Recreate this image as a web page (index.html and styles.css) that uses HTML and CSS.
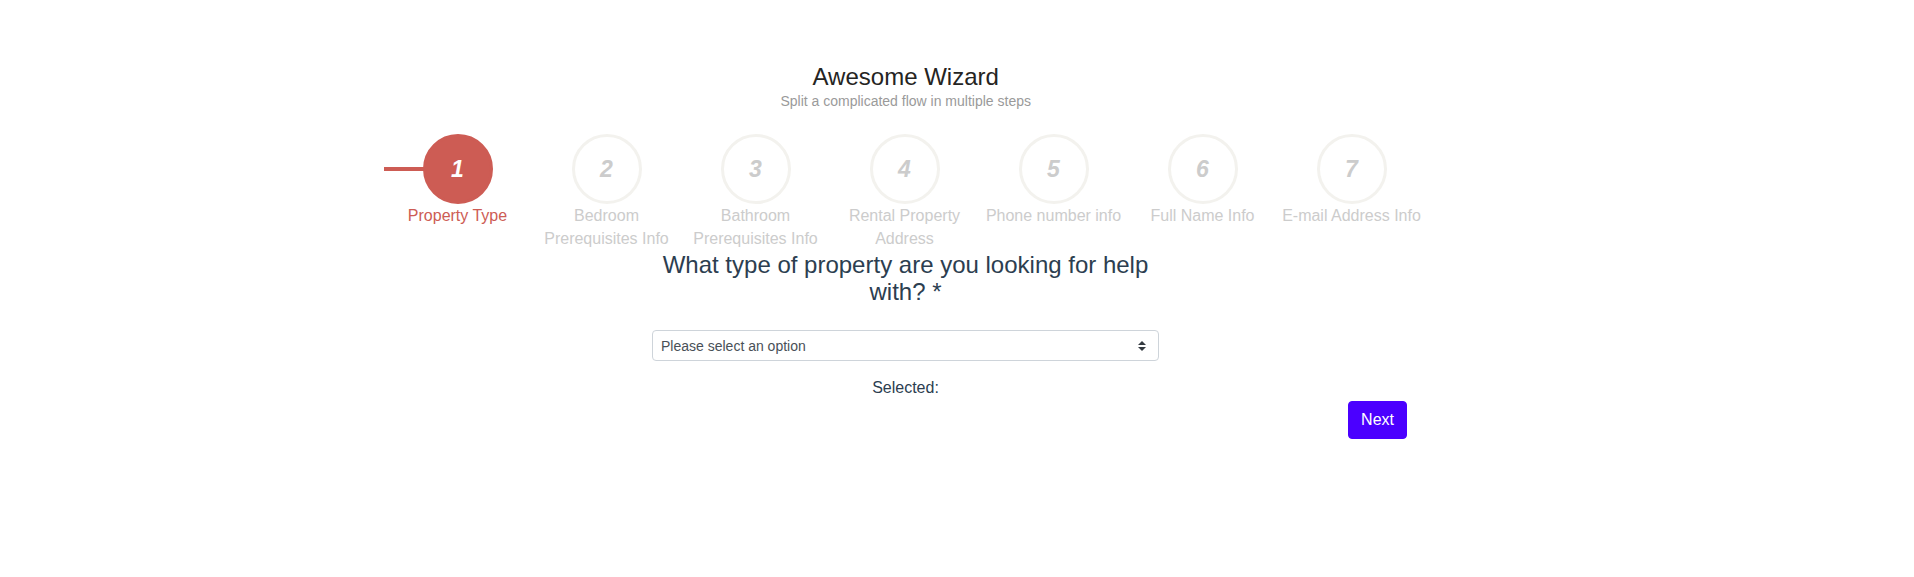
FILE: index.html
```html
<!DOCTYPE html>
<html lang="en">
<head>
<meta charset="utf-8">
<title>Awesome Wizard</title>
<link rel="stylesheet" href="styles.css">
</head>
<body>
<div class="wizard">
  <div class="wizard-header">
    <h4 class="wizard-title">Awesome Wizard</h4>
    <p class="wizard-category">Split a complicated flow in multiple steps</p>
  </div>
  <nav class="wizard-nav">
    <div class="progress-line" style="width: 74px"></div>
    <ul class="steps">
      <li class="step active"><div class="circle"><i class="icon">1</i></div><span class="step-title">Property Type</span></li>
      <li class="step"><div class="circle"><i class="icon">2</i></div><span class="step-title">Bedroom Prerequisites Info</span></li>
      <li class="step"><div class="circle"><i class="icon">3</i></div><span class="step-title">Bathroom Prerequisites Info</span></li>
      <li class="step"><div class="circle"><i class="icon">4</i></div><span class="step-title">Rental Property Address</span></li>
      <li class="step"><div class="circle"><i class="icon">5</i></div><span class="step-title">Phone number info</span></li>
      <li class="step"><div class="circle"><i class="icon">6</i></div><span class="step-title">Full Name Info</span></li>
      <li class="step"><div class="circle"><i class="icon">7</i></div><span class="step-title">E-mail Address Info</span></li>
    </ul>
  </nav>
  <div class="tab-content">
    <h3 class="question">What type of property are you looking for help with? *</h3>
    <div class="select-wrap">
      <select class="custom-select">
        <option>Please select an option</option>
      </select>
      <svg class="select-arrow" width="8" height="10" viewBox="0 0 4 5"><path d="M2 0L0 2h4zm0 5L0 3h4z" fill="#343a40"/></svg>
    </div>
    <div class="selected">Selected:</div>
  </div>
  <div class="wizard-footer">
    <button class="btn-next" type="button">Next</button>
  </div>
</div>
</body>
</html>
```
FILE: styles.css
```css
* { box-sizing: border-box; }
body {
  margin: 0;
  font-family: "Liberation Sans", Arial, Helvetica, sans-serif;
  color: #2c3e50;
  background: #fff;
}
.wizard {
  width: 1043px;
  margin-left: 383px;
  padding-top: 63px;
}
.wizard-header {
  text-align: center;
  padding-left: 2.4px;
}
.wizard-title {
  margin: 0;
  font-size: 24px;
  font-weight: 400;
  line-height: 1.15;
  color: #252422;
}
.wizard-category {
  margin: 0;
  font-size: 14px;
  line-height: 20px;
  color: #9a9a9a;
}
.wizard-nav {
  position: relative;
  margin-top: 23.5px;
}
.progress-line {
  position: absolute;
  left: 1px;
  top: 33px;
  height: 4px;
  background: #cd5c54;
}
.steps {
  list-style: none;
  margin: 0;
  padding: 0;
  display: flex;
}
.step {
  flex: 1 1 0;
  display: flex;
  flex-direction: column;
  align-items: center;
  position: relative;
}
.circle {
  width: 70px;
  height: 70px;
  border: 3px solid #f3f2ee;
  border-radius: 50%;
  background: #fff;
  display: flex;
  align-items: center;
  justify-content: center;
}
.icon {
  font-size: 23px;
  font-weight: 700;
  font-style: italic;
  color: #cccccc;
  line-height: 1;
}
.step-title {
  padding-top: 1px;
  font-size: 16px;
  line-height: 22.86px;
  color: #cccccc;
  text-align: center;
}
.step.active .circle {
  background: #cd5c54;
  border-color: #cd5c54;
}
.step.active .icon { color: #fff; }
.step.active .step-title { color: #cd5c54; }
.tab-content {
  width: 507px;
  margin-left: 269px;
  text-align: center;
}
.question {
  margin: 0;
  font-size: 24px;
  font-weight: 400;
  line-height: 1.15;
  color: #2c3e50;
}
.select-wrap {
  position: relative;
  margin-top: 24px;
}
.custom-select {
  display: block;
  width: 100%;
  height: 31px;
  padding: 0 28px 0 8px;
  font-family: inherit;
  font-size: 14px;
  color: #495057;
  background: #fff;
  border: 1px solid #ced4da;
  border-radius: 4px;
  appearance: none;
  -webkit-appearance: none;
}
.select-arrow {
  position: absolute;
  right: 13px;
  top: 10.5px;
}
.selected {
  margin-top: 15px;
  font-size: 16px;
  line-height: 24px;
  color: #2c3e50;
}
.wizard-footer {
  display: flex;
  justify-content: flex-end;
  padding-right: 19px;
  padding-top: 1px;
}
.btn-next {
  height: 38px;
  padding: 6px 12px;
  font-family: inherit;
  font-size: 16px;
  line-height: 24px;
  color: #fff;
  background: #4b00ff;
  border: 1px solid #4b00ff;
  border-radius: 4px;
}
```
